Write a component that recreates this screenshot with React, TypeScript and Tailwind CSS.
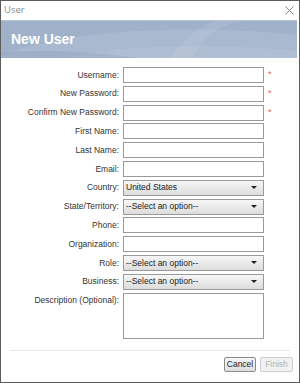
import React from 'react';

type Row = { label: string; kind: 'text' | 'select' | 'area'; value?: string; required?: boolean };

const rows: Row[] = [
  { label: 'Username:', kind: 'text', required: true },
  { label: 'New Password:', kind: 'text', required: true },
  { label: 'Confirm New Password:', kind: 'text', required: true },
  { label: 'First Name:', kind: 'text' },
  { label: 'Last Name:', kind: 'text' },
  { label: 'Email:', kind: 'text' },
  { label: 'Country:', kind: 'select', value: 'United States' },
  { label: 'State/Territory:', kind: 'select', value: '--Select an option--' },
  { label: 'Phone:', kind: 'text' },
  { label: 'Organization:', kind: 'text' },
  { label: 'Role:', kind: 'select', value: '--Select an option--' },
  { label: 'Business:', kind: 'select', value: '--Select an option--' },
  { label: 'Description (Optional):', kind: 'area' },
];

function Field({ row }: { row: Row }) {
  if (row.kind === 'select') {
    return (
      <div className="h-[16px] border border-[#9a9a9a] bg-gradient-to-b from-[#f7f7f7] to-[#dcdcdc] flex items-center justify-between pl-[2px] pr-[6px] text-[8.5px] text-[#222]">
        <span>{row.value}</span>
        <span className="w-0 h-0 border-l-[3px] border-r-[3px] border-t-[3px] border-l-transparent border-r-transparent border-t-[#222]" />
      </div>
    );
  }
  if (row.kind === 'area') {
    return <div className="h-[46px] border border-[#9a9a9a] bg-white" />;
  }
  return <div className="h-[16px] border border-[#9a9a9a] bg-white" />;
}

export default function App() {
  return (
    <div className="w-[300px] h-[383px] border border-[#5c5c5c] bg-white flex flex-col font-['Liberation_Sans',Arial,sans-serif]">
      {/* Window title bar */}
      <div className="h-[19px] flex items-center justify-between pl-[3px] pr-[5px] font-['Open_Sans',sans-serif] text-[9.5px] text-[#8c8c8c]">
        <span>User</span>
        <svg width="9" height="9" viewBox="0 0 9 9" className="text-[#777]">
          <path d="M0.5 0.5L8.5 8.5M8.5 0.5L0.5 8.5" stroke="currentColor" strokeWidth="0.9" />
        </svg>
      </div>

      {/* Header band */}
      <div className="relative h-[38px] mr-[2px] bg-[#a0b2ca] border-t border-[#b7c5d8] overflow-hidden flex items-center">
        <svg className="absolute inset-0" width="296" height="38" viewBox="0 0 296 38">
          <path d="M-10 38 C 60 10, 170 2, 300 14 L300 38 Z" fill="#ffffff" fillOpacity="0.1" />
          <path d="M60 38 C 120 24, 200 22, 300 30 L300 38 Z" fill="#ffffff" fillOpacity="0.08" />
          <path d="M170 38 C 180 22, 190 10, 215 0 L235 0 C 205 12, 195 26, 192 38 Z" fill="#ffffff" fillOpacity="0.08" />
          <path d="M-10 32 C 50 28, 90 30, 140 38 L-10 38 Z" fill="#8ea3be" fillOpacity="0.4" />
        </svg>
        <span className="relative pl-[10px] text-[14px] font-bold text-white">New User</span>
      </div>

      {/* Form */}
      <div className="pt-[9px] pl-[1px] grid grid-cols-[117px_141px_12px] gap-x-[4px] gap-y-[2.8px] items-start text-[8.5px] text-[#333]">
        {rows.map((row) => (
          <React.Fragment key={row.label}>
            <div className="h-[16px] flex items-center justify-end">{row.label}</div>
            <Field row={row} />
            <div className="h-[16px] flex items-center text-[#f06060] text-[9px]">{row.required ? '*' : ''}</div>
          </React.Fragment>
        ))}
      </div>

      {/* Footer */}
      <div className="mt-[11px] mx-[9px] h-[1px] bg-[#a8a8a8] border-b border-[#e6e6e6]" />
      <div className="flex justify-end gap-[4px] pr-[6px] pt-[6px]">
        <button className="h-[15px] w-[32px] border border-[#8a8a8a] rounded-[2px] bg-gradient-to-b from-[#f8f8f8] to-[#dedede] text-[8.5px] text-[#222]">Cancel</button>
        <button className="h-[15px] w-[33px] border border-[#cfcfcf] rounded-[2px] bg-[#f2f2f2] text-[8.5px] text-[#b3b3b3]">Finish</button>
      </div>
    </div>
  );
}
